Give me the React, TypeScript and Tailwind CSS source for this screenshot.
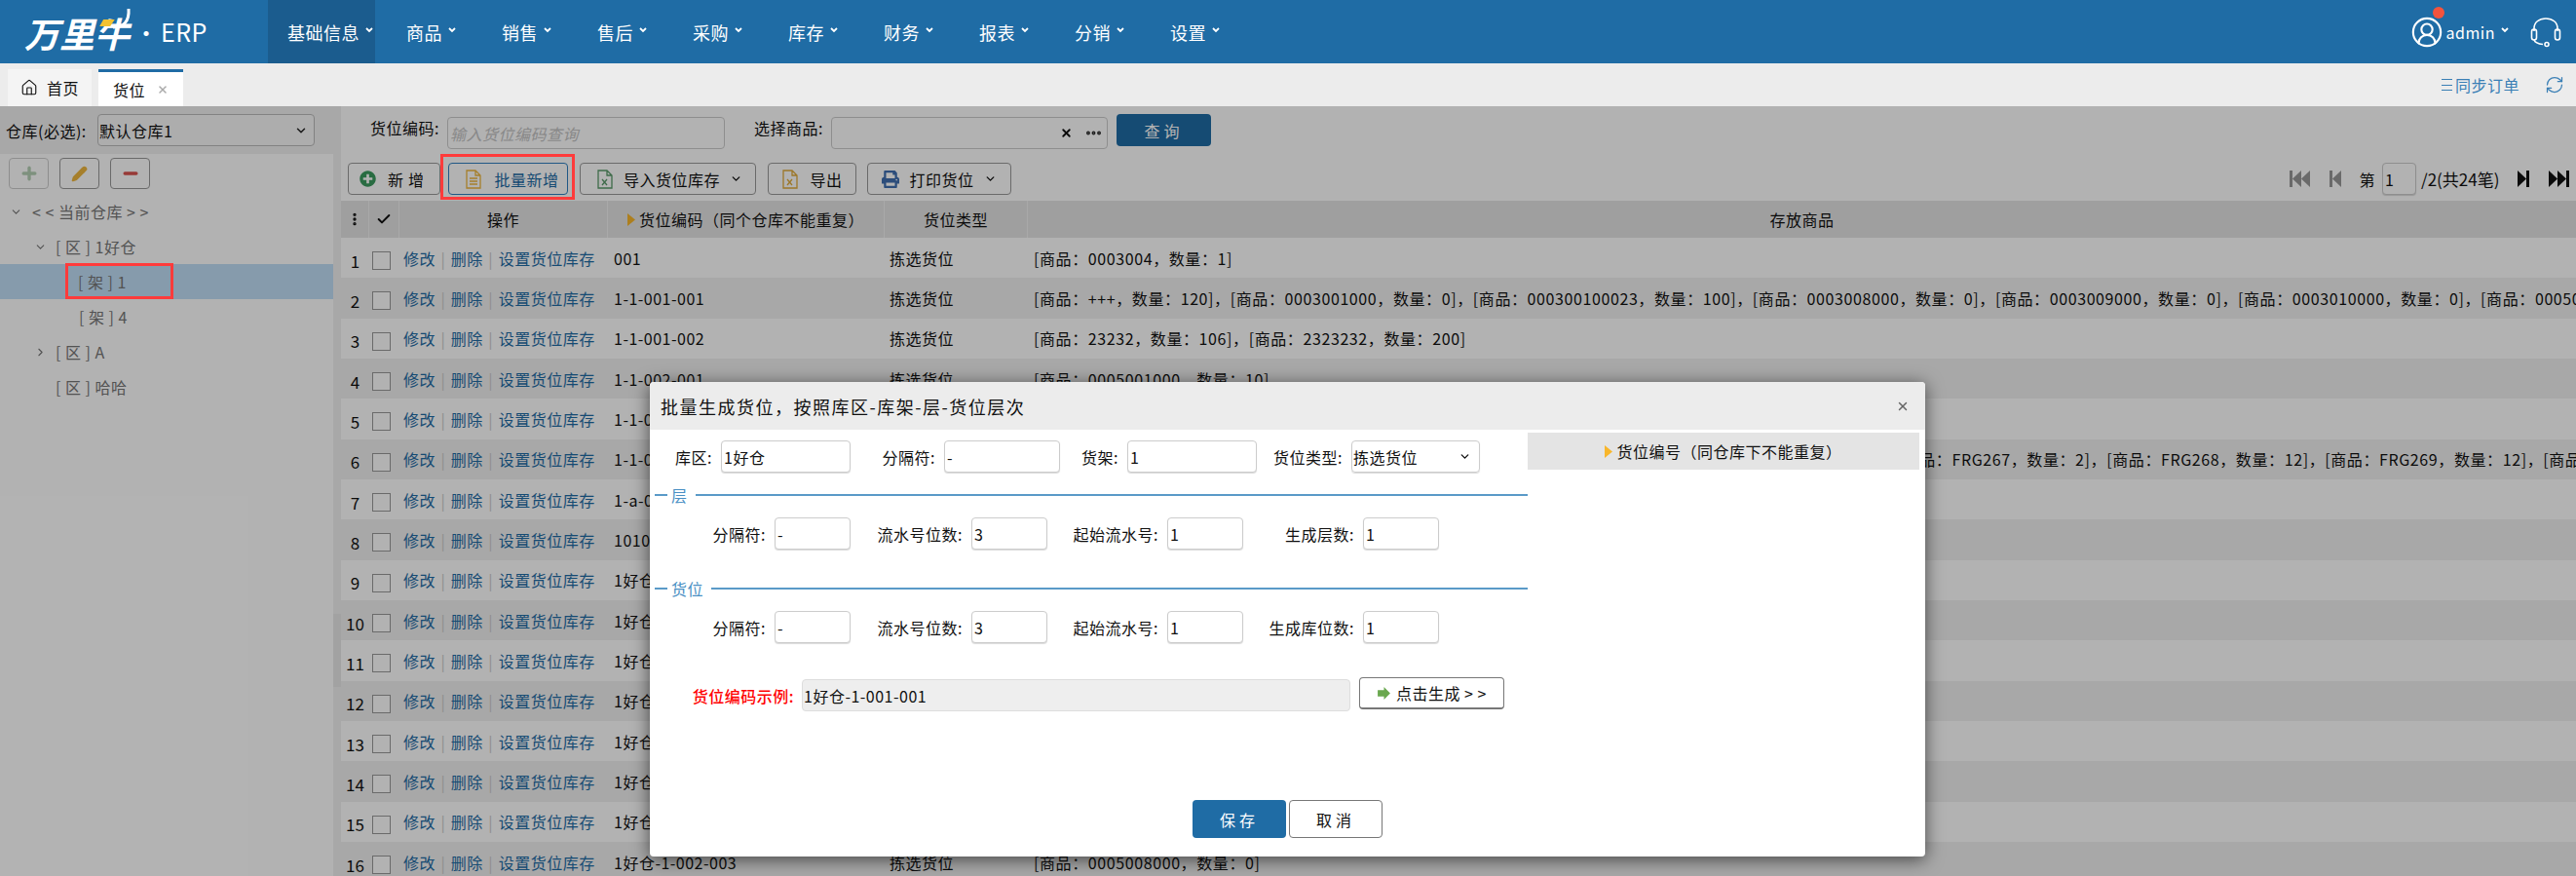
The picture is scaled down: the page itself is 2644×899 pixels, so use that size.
import React from "react";
import { ChevronDown, ChevronRight, Home, RefreshCw, X, Pencil, Plus, Minus, Check, Ellipsis, CircleUserRound } from "lucide-react";
import { FaPlusCircle, FaPrint } from "react-icons/fa";

const NAV = ["商品", "销售", "售后", "采购", "库存", "财务", "报表", "分销", "设置"];

const CODES = [
  "001", "1-1-001-001", "1-1-001-002", "1-1-002-001", "1-1-002-002", "1-1-003-001", "1-a-001-001", "1010",
  "1好仓-1-001-001", "1好仓-1-001-002", "1好仓-1-001-003", "1好仓-1-001-004", "1好仓-1-001-005", "1好仓-1-002-001", "1好仓-1-002-002", "1好仓-1-002-003",
];

const GOODS: Record<number, string> = {
  0: "[商品：0003004，数量：1]",
  1: "[商品：+++，数量：120]，[商品：0003001000，数量：0]，[商品：000300100023，数量：100]，[商品：0003008000，数量：0]，[商品：0003009000，数量：0]，[商品：0003010000，数量：0]，[商品：0005001000，数量：0]",
  2: "[商品：23232，数量：106]，[商品：2323232，数量：200]",
  3: "[商品：0005001000，数量：10]",
  5: "[商品：FRG263，数量：12]，[商品：FRG264，数量：12]，[商品：FRG265，数量：12]，[商品：FRG266，数量：2]，[商品：FRG267，数量：2]，[商品：FRG268，数量：12]，[商品：FRG269，数量：12]，[商品：FRG270，数量：12]",
  15: "[商品：0005008000，数量：0]",
};

const Caret = () => (
  <svg width="8" height="6" viewBox="0 0 8 6" className="ml-[6px] mb-[3px]">
    <path d="M1 1l3 3 3-3" fill="none" stroke="white" strokeWidth="1.8" />
  </svg>
);

const Triangle = () => (
  <svg width="8" height="13" viewBox="0 0 8 13" className="mr-[4px] shrink-0">
    <path d="M0 0l8 6.5L0 13z" fill="#f8b62b" />
  </svg>
);

const FileIcon = ({ color, mark }: { color: string; mark?: boolean }) => (
  <svg width="18" height="20" viewBox="0 0 18 20" className="shrink-0">
    <path d="M2 1h9l5 5v13H2z M11 1v5h5" fill="none" stroke={color} strokeWidth="1.3" />
    {mark ? (
      <path d="M6 10l5 6M11 10l-5 6" fill="none" stroke={color} strokeWidth="1.3" />
    ) : (
      <path d="M5 9h8M5 12h8M5 15h8" fill="none" stroke={color} strokeWidth="1.3" />
    )}
  </svg>
);

const SkipIcon = ({ dir, double, color }: { dir: "l" | "r"; double?: boolean; color: string }) => (
  <svg width={double ? 21 : 13} height="17" viewBox={double ? "0 0 21 17" : "0 0 13 17"} className={dir === "r" ? "-scale-x-100" : ""}>
    <rect x="0" y="0" width="3" height="17" fill={color} />
    <path d="M3 8.5L12 0v17z" fill={color} />
    {double && <path d="M12 8.5L21 0v17z" fill={color} />}
  </svg>
);

const HeadsetIcon = () => (
  <svg width="32" height="32" viewBox="0 0 32 32" fill="none" stroke="white" strokeWidth="1.6" className="ml-[22px]">
    <path d="M4 15V12C4 6 9 2 16 2s12 4 12 10v3" />
    <rect x="1.5" y="13" width="5" height="11" rx="2.5" />
    <rect x="25.5" y="13" width="5" height="11" rx="2.5" />
    <path d="M4 24c1 3 4 4 9 4.500" />
    <circle cx="17" cy="28.500" r="2" />
  </svg>
);

const ToolButton = ({ className, children }: { className: string; children: React.ReactNode }) => (
  <button className={`flex items-center justify-center h-[33px] border border-[#999] rounded-[4px] bg-white ${className}`}>
    {children}
  </button>
);

const TextInput = ({ value, className }: { value: string; className: string }) => (
  <div className={`flex items-center h-[33px] pl-[2px] border border-[#ccc] rounded-[4px] bg-white shadow-[0_1px_1px_rgba(0,0,0,0.15)] ${className}`}>
    {value}
  </div>
);

const Field = ({ label, value, labelW, inputW }: { label: string; value: string; labelW: string; inputW: string }) => (
  <>
    <span className={`text-right shrink-0 mr-[9px] ${labelW}`}>{label}</span>
    <TextInput value={value} className={`shrink-0 ${inputW}`} />
  </>
);

const Legend = ({ title }: { title: string }) => (
  <div className="flex items-center h-[24px] mt-[11px] pl-[5px] text-[#4a90c4]">
    <span className="w-[13px] h-[2px] bg-[#5a9ac8]" />
    <span className="mx-[4px]">{title}</span>
    <span className="flex-1 h-[2px] bg-[#5a9ac8] ml-[4px]" />
  </div>
);

const Sidebar = () => (
  <aside className="w-[342px] shrink-0 text-[#777]">
    <div className="flex items-center h-[49px] w-[350px] bg-[#f1f1f1] pl-[6px] text-[#111]">
      <span className="w-[94px]">仓库(必选):</span>
      <div className="flex items-center justify-between w-[223px] h-[33px] pl-[1px] pr-[6px] border border-[#bbb] rounded-[4px] bg-[#f8f8f8]">
        默认仓库1
        <ChevronDown size={14} strokeWidth={2.5} color="#222" />
      </div>
    </div>
    <div className="flex gap-[11px] h-[41px] pt-[4px] pl-[9px]">
      <button className="flex items-center justify-center w-[41px] h-[32px] border border-[#ccc] rounded-[4px]">
        <Plus size={20} strokeWidth={4} color="#b5d0b5" />
      </button>
      <button className="flex items-center justify-center w-[41px] h-[32px] border border-[#999] rounded-[4px]">
        <Pencil size={17} fill="#eeb73f" color="#eeb73f" />
      </button>
      <button className="flex items-center justify-center w-[41px] h-[32px] border border-[#999] rounded-[4px]">
        <Minus size={20} strokeWidth={4} color="#d9534f" />
      </button>
    </div>
    <div className="flex items-center h-[36px] pl-[10px]">
      <ChevronDown size={13} className="mr-[10px]" />
      {"< < 当前仓库 > >"}
    </div>
    <div className="flex items-center h-[36px] pl-[35px]">
      <ChevronDown size={13} className="mr-[9px]" />[ 区 ] 1好仓
    </div>
    <div className="flex items-center h-[36px] pl-[80px] bg-[#c1dff7]">[ 架 ] 1</div>
    <div className="flex items-center h-[36px] pl-[81px]">[ 架 ] 4</div>
    <div className="flex items-center h-[36px] pl-[35px]">
      <ChevronRight size={13} className="mr-[9px]" />[ 区 ] A
    </div>
    <div className="flex items-center h-[36px] pl-[57px]">[ 区 ] 哈哈</div>
  </aside>
);

const Toolbar = () => (
  <div className="flex items-start h-[48px] pt-[9px] pl-[7px] pr-[7px]">
    <ToolButton className="w-[95px] gap-[12px]">
      <FaPlusCircle size={17} color="#3b9b5f" />
      <span className="tracking-[5px]">新增</span>
    </ToolButton>
    <ToolButton className="w-[123px] ml-[8px] pl-[8px] gap-[12px] !border-[#2f7fc0] text-[#1f6ca5]">
      <FileIcon color="#eeb73f" />
      批量新增
    </ToolButton>
    <ToolButton className="w-[181px] ml-[12px] pl-[3px] gap-[10px]">
      <FileIcon color="#5a9a6a" mark />
      导入货位库存
      <ChevronDown size={13} strokeWidth={2.5} />
    </ToolButton>
    <ToolButton className="w-[91px] ml-[12px] gap-[11px]">
      <FileIcon color="#e0ab3a" mark />
      导出
    </ToolButton>
    <ToolButton className="w-[148px] ml-[11px] gap-[10px]">
      <FaPrint size={18} color="#3f6fb0" />
      打印货位
      <ChevronDown size={13} strokeWidth={2.5} />
    </ToolButton>
    <div className="ml-auto flex items-center h-[33px]">
      <SkipIcon dir="l" double color="#999" />
      <span className="w-[20px]" />
      <SkipIcon dir="l" color="#999" />
      <span className="ml-[17px] mr-[7px]">第</span>
      <TextInput value="1" className="w-[35px]" />
      <span className="ml-[5px] w-[84px] text-[17px] tracking-normal whitespace-nowrap">/2(共24笔)</span>
      <span className="ml-[14px]"><SkipIcon dir="r" color="#111" /></span>
      <span className="ml-[20px]"><SkipIcon dir="r" double color="#111" /></span>
    </div>
  </div>
);

const GRID = "grid grid-cols-[29px_31px_214px_284px_147px_1fr]";

const Table = () => (
  <div>
    <div className={`${GRID} h-[38px] bg-[#e4e4e4] items-center text-center`}>
      <div className="flex items-center justify-center h-full border-r border-white/50">
        <Ellipsis size={16} strokeWidth={3} className="rotate-90" color="#111" />
      </div>
      <div className="flex items-center justify-center h-full border-r border-white/50">
        <Check size={16} strokeWidth={3} color="#111" />
      </div>
      <div className="flex items-center justify-center h-full border-r border-white/50">操作</div>
      <div className="flex items-center justify-center h-full border-r border-white/50 whitespace-nowrap">
        <Triangle />
        货位编码（同个仓库不能重复）
      </div>
      <div className="flex items-center justify-center h-full border-r border-white/50">货位类型</div>
      <div className="flex items-center justify-center h-full">存放商品</div>
    </div>
    {CODES.map((code, i) => (
      <div key={code} className={`${GRID} h-[41.33px] items-center whitespace-nowrap ${i % 2 ? "bg-[#f1f1f1]" : "bg-white"}`}>
        <span className="text-center pt-[6px] text-[17px] tracking-normal">{i + 1}</span>
        <span className="flex justify-center pt-[6px]">
          <span className="w-[19px] h-[19px] border border-[#999] bg-white ml-[-6px]" />
        </span>
        <span className="flex items-center pl-[4px] text-[#1f6ca5]">
          修改<span className="mx-[5.5px] text-[#ccc]">|</span>删除<span className="mx-[5.5px] text-[#ccc]">|</span>设置货位库存
        </span>
        <span className="pl-[6px]">{code}</span>
        <span className="pl-[5px]">拣选货位</span>
        <span className="pl-[6px] overflow-hidden tracking-[0.6px]">{GOODS[i] ?? ""}</span>
      </div>
    ))}
  </div>
);

const Modal = () => (
  <div className="absolute left-[667px] top-[392px] w-[1309px] h-[487px] bg-white rounded-[4px] overflow-hidden shadow-[0_3px_18px_rgba(0,0,0,0.6)] z-20">
    <div className="flex items-center justify-between h-[49px] bg-[#ececec] pl-[11px] pr-[16px] text-[18px] tracking-[1.5px]">
      批量生成货位，按照库区-库架-层-货位层次
      <X size={14} strokeWidth={2.5} color="#666" />
    </div>
    <div className="flex">
      <div className="w-[901px] shrink-0">
        <div className="flex items-center mt-[11px]">
          <Field label="库区:" value="1好仓" labelW="w-[64px]" inputW="w-[133px]" />
          <Field label="分隔符:" value="-" labelW="w-[87px]" inputW="w-[119px]" />
          <Field label="货架:" value="1" labelW="w-[60px]" inputW="w-[133px]" />
          <span className="w-[88px] text-right mr-[9px] whitespace-nowrap">货位类型:</span>
          <div className="flex items-center justify-between w-[132px] h-[33px] pl-[1px] pr-[8px] border border-[#ccc] rounded-[4px] shadow-[0_1px_1px_rgba(0,0,0,0.15)]">
            拣选货位
            <ChevronDown size={13} strokeWidth={2.5} />
          </div>
        </div>
        <Legend title="层" />
        <div className="flex items-center mt-[11px]">
          <Field label="分隔符:" value="-" labelW="w-[119px]" inputW="w-[78px]" />
          <Field label="流水号位数:" value="3" labelW="w-[115px]" inputW="w-[78px]" />
          <Field label="起始流水号:" value="1" labelW="w-[114px]" inputW="w-[78px]" />
          <Field label="生成层数:" value="1" labelW="w-[114px]" inputW="w-[78px]" />
        </div>
        <div className="h-[17px]" />
        <Legend title="货位" />
        <div className="flex items-center mt-[11px]">
          <Field label="分隔符:" value="-" labelW="w-[119px]" inputW="w-[78px]" />
          <Field label="流水号位数:" value="3" labelW="w-[115px]" inputW="w-[78px]" />
          <Field label="起始流水号:" value="1" labelW="w-[114px]" inputW="w-[78px]" />
          <Field label="生成库位数:" value="1" labelW="w-[114px]" inputW="w-[78px]" />
        </div>
        <div className="flex items-center mt-[37px]">
          <span className="w-[148px] mr-[8px] shrink-0 text-right font-medium text-[#ff0000]">货位编码示例:</span>
          <div className="flex items-center w-[563px] h-[33px] pl-[1px] border border-[#ddd] rounded-[4px] bg-[#eeeeee]">1好仓-1-001-001</div>
          <button className="flex items-center justify-center gap-[5px] w-[149px] h-[33px] ml-[9px] -mt-[4px] border border-[#777] border-b-2 rounded-[4px] bg-white whitespace-nowrap">
            <svg width="15" height="15" viewBox="0 0 14 14">
              <path d="M7 1l6 6-6 6v-3H1V4h6z" fill="#6aa84f" />
            </svg>
            点击生成 {"> >"}
          </button>
        </div>
      </div>
      <div className="flex items-center justify-center w-[402px] h-[38px] mt-[3px] bg-[#e4e4e4] whitespace-nowrap">
        <Triangle />
        货位编号（同仓库下不能重复）
      </div>
    </div>
    <div className="flex justify-center gap-[3px] mt-[91px]">
      <button className="w-[96px] h-[39px] rounded-[4px] bg-[#1f6ca5] text-white tracking-[4px]">保存</button>
      <button className="w-[96px] h-[39px] rounded-[4px] border border-[#777] bg-white tracking-[4px]">取消</button>
    </div>
  </div>
);

export default function App() {
  return (
    <div className="relative w-[2644px] h-[899px] overflow-hidden bg-white text-[16px] leading-[22px] tracking-[0.5px] text-[#111] font-['Noto_Sans_CJK_SC','Noto_Sans',sans-serif]">
      <header className="flex items-center h-[65px] bg-[#1f6ca5] text-white text-[18px]">
        <div className="relative flex items-center w-[275px] h-full pl-[25px]">
          <span className="italic font-bold text-[36px] leading-none tracking-normal">万里牛</span>
          <svg width="26" height="22" viewBox="0 0 26 22" className="absolute left-[112px] top-[8px]">
            <path d="M4 20c10 0 17-5 16-19" fill="none" stroke="white" strokeWidth="3" />
          </svg>
          <svg width="16" height="7" viewBox="0 0 20 9" className="absolute left-[102px] top-[20px]">
            <path d="M5 0h15l-6 9H0z" fill="#f2c230" />
          </svg>
          <span className="ml-[5px] text-[24px] leading-none tracking-normal">·</span>
          <span className="ml-[3px] text-[25px] leading-none tracking-[0.5px]">ERP</span>
        </div>
        <div className="flex items-center w-[110px] h-full pl-[20px] bg-[#1b5c8e]">
          基础信息
          <Caret />
        </div>
        {NAV.map((name) => (
          <div key={name} className="flex items-center w-[98px] h-full pl-[32px]">
            {name}
            <Caret />
          </div>
        ))}
        <div className="relative flex items-center ml-auto pr-[15px]">
          <CircleUserRound size={34} strokeWidth={1.5} />
          <span className="absolute left-[23px] top-[-9px] w-[12px] h-[12px] rounded-full bg-[#f4533d]" />
          <span className="ml-[3px] text-[16px]">admin</span>
          <Caret />
          <HeadsetIcon />
        </div>
      </header>

      <nav className="flex items-end h-[44px] bg-[#ececec] pl-[8px] pr-[12px]">
        <div className="flex items-center justify-center gap-[9px] w-[86px] h-[38px] bg-[#f4f4f4]">
          <Home size={18} strokeWidth={1.5} />
          首页
        </div>
        <div className="flex items-center justify-center gap-[12px] w-[87px] h-[38px] ml-[7px] bg-white border-t-[3px] border-[#1f6ca5]">
          货位
          <X size={12} strokeWidth={3} color="#aaa" />
        </div>
        <div className="ml-auto flex items-center self-center text-[#3a7fb5]">
          <span className="flex flex-col justify-between w-[11px] h-[12px] mr-[3px]">
            <span className="h-[1px] bg-[#3a7fb5]" />
            <span className="h-[1px] bg-[#3a7fb5]" />
            <span className="h-[1px] bg-[#3a7fb5]" />
          </span>
          同步订单
          <RefreshCw size={20} strokeWidth={1.5} className="ml-[26px]" />
        </div>
      </nav>

      <main className="flex h-[790px]">
        <Sidebar />
        <div className="flex flex-col justify-start w-[8px] shrink-0 bg-[#f1f1f1] pt-[521px]">
          <div className="h-[75px] bg-[#e8e8e8]" />
        </div>
        <section className="flex-1 min-w-0">
          <div className="flex items-start h-[49px] pt-[11px]">
            <span className="ml-[30px] mr-[9px] w-[70px] whitespace-nowrap">货位编码:</span>
            <div className="flex items-center w-[285px] h-[33px] pl-[2px] border border-[#ccc] rounded-[4px] italic text-[#c4c4c4]">输入货位编码查询</div>
            <span className="ml-[30px] mr-[8px] w-[71px] whitespace-nowrap">选择商品:</span>
            <div className="flex items-center justify-end gap-[12px] w-[284px] h-[33px] pr-[4px] border border-[#ccc] rounded-[4px]">
              <X size={13} strokeWidth={3.5} color="#111" />
              <Ellipsis size={19} strokeWidth={3} color="#333" />
            </div>
            <button className="w-[97px] h-[33px] ml-[9px] -mt-[3px] rounded-[4px] bg-[#1f6ca5] text-white tracking-[4px]">查询</button>
          </div>
          <Toolbar />
          <Table />
        </section>
      </main>

      {/* 遮罩 */}
      <div className="absolute left-0 right-0 top-[109px] bottom-0 bg-black/30 z-10" />
      {/* 红框标注 */}
      <div className="absolute left-[452px] top-[158px] w-[138px] h-[47px] border-[3px] border-[#ff3b3b] z-20" />
      <div className="absolute left-[67px] top-[270px] w-[111px] h-[37px] border-[3px] border-[#ff3b3b] z-20" />
      <Modal />
    </div>
  );
}
